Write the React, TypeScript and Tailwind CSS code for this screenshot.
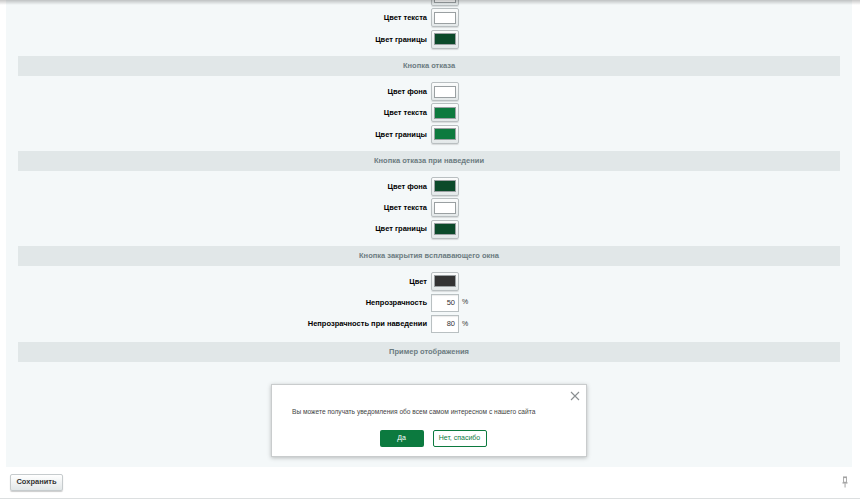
import React from "react";

const font = { fontFamily: '"Liberation Sans", Arial, sans-serif' };

function Swatch({ color }: { color: string }) {
  return (
    <div className="w-[28px] h-[19px] border border-[#b9bfc1] rounded-[2px] bg-gradient-to-b from-[#fbfcfc] to-[#e3e8e9] flex items-center justify-center shadow-[0_1px_1px_rgba(0,0,0,0.12)]">
      <div className="w-[22px] h-[12px] border border-[#9aa0a2]" style={{ backgroundColor: color }} />
    </div>
  );
}

function NumInput({ value }: { value: string }) {
  return (
    <div className="flex items-center gap-[3px]">
      <div className="w-[28px] h-[18px] border border-[#b9c0c2] bg-white flex items-center justify-end pr-[3px] text-[7.5px] text-[#333] shadow-[inset_0_1px_1px_rgba(0,0,0,0.08)]">
        {value}
      </div>
      <span className="text-[7px] text-[#333]">%</span>
    </div>
  );
}

function Row({ label, children }: { label: string; children: React.ReactNode }) {
  return (
    <div className="grid grid-cols-[1fr_1fr] h-[21.3px] items-center">
      <div className="text-right pr-[2px] text-[7.5px] font-bold text-black">{label}</div>
      <div className="pl-[2px]">{children}</div>
    </div>
  );
}

function Header({ title }: { title: string }) {
  return (
    <div className="h-[20px] bg-[#e1e7e8] flex items-center justify-center text-[7.5px] font-bold text-[#6b7b80]">
      {title}
    </div>
  );
}

function Section({ title, pb, children }: { title?: string; pb: string; children: React.ReactNode }) {
  return (
    <div>
      {title && <Header title={title} />}
      <div className={pb}>{children}</div>
    </div>
  );
}

export default function App() {
  return (
    <div className="w-[860px] h-[499px] bg-white relative overflow-hidden flex flex-col" style={font}>
      <div className="absolute top-0 left-0 right-0 h-[5px] bg-gradient-to-b from-[rgba(0,0,0,0.22)] to-transparent z-10" />
      <div className="mx-[6px] w-[846px] h-[467px] bg-[#f4f8f9] px-[12px] overflow-hidden shrink-0">
        <div className="-mt-[14px]">
          <Section pb="pb-[6px]">
            <Row label=""><Swatch color="#ffffff" /></Row>
            <Row label="Цвет текста"><Swatch color="#ffffff" /></Row>
            <Row label="Цвет границы"><Swatch color="#0b4a2a" /></Row>
          </Section>
          <Section title="Кнопка отказа" pb="pt-[5px] pb-[6px]">
            <Row label="Цвет фона"><Swatch color="#ffffff" /></Row>
            <Row label="Цвет текста"><Swatch color="#0d7a3e" /></Row>
            <Row label="Цвет границы"><Swatch color="#0d7a3e" /></Row>
          </Section>
          <Section title="Кнопка отказа при наведении" pb="pt-[5px] pb-[6px]">
            <Row label="Цвет фона"><Swatch color="#0b4a2a" /></Row>
            <Row label="Цвет текста"><Swatch color="#ffffff" /></Row>
            <Row label="Цвет границы"><Swatch color="#0b4a2a" /></Row>
          </Section>
          <Section title="Кнопка закрытия всплавающего окна" pb="pt-[5px] pb-[7px]">
            <Row label="Цвет"><Swatch color="#333333" /></Row>
            <Row label="Непрозрачность"><NumInput value="50" /></Row>
            <Row label="Непрозрачность при наведении"><NumInput value="80" /></Row>
          </Section>
          <Header title="Пример отображения" />
          <div className="pt-[22px] flex justify-center">
            <div className="relative w-[316px] h-[73px] bg-white border border-[#c9cccd] shadow-[0_1px_4px_rgba(0,0,0,0.25)] pl-[20px] pt-[22px]">
              <button className="absolute right-[5px] top-[5px] w-[12px] h-[12px] flex items-center justify-center">
                <svg width="10" height="10" viewBox="0 0 10 10">
                  <path d="M1 1 L9 9 M9 1 L1 9" stroke="#8a8f91" strokeWidth="1.1" />
                </svg>
              </button>
              <div className="text-[6.6px] text-[#444] leading-[10px]">
                Вы можете получать уведомления обо всем самом интересном с нашего сайта
              </div>
              <div className="flex justify-center gap-[9px] mt-[13px] pr-[12px]">
                <div className="w-[44px] h-[17px] rounded-[2px] bg-[#0c7a3f] text-white text-[7px] flex items-center justify-center">
                  Да
                </div>
                <div className="w-[54px] h-[17px] rounded-[2px] bg-white border border-[#0c7a3f] text-[#0c7a3f] text-[7px] flex items-center justify-center">
                  Нет, спасибо
                </div>
              </div>
            </div>
          </div>
        </div>
      </div>
      <div className="flex-1 flex items-center justify-between px-[10px] border-b border-[#dcdfe0] pb-[1px]">
        <div className="w-[53px] h-[17px] rounded-[2px] border border-[#c6cbcd] bg-gradient-to-b from-[#ffffff] to-[#e2e7e8] shadow-[0_1px_1px_rgba(0,0,0,0.2)] flex items-center justify-center text-[7.5px] font-bold text-[#333]">
          Сохранить
        </div>
        <svg width="6" height="12" viewBox="0 0 6 12" className="mr-[2px]">
          <rect x="1" y="0.5" width="4" height="1.2" fill="#999" />
          <rect x="1.6" y="1.7" width="2.8" height="4.5" fill="none" stroke="#999" strokeWidth="0.8" />
          <rect x="0.5" y="6.3" width="5" height="1.2" fill="#999" />
          <rect x="2.6" y="7.5" width="0.9" height="4" fill="#999" />
        </svg>
      </div>
    </div>
  );
}
